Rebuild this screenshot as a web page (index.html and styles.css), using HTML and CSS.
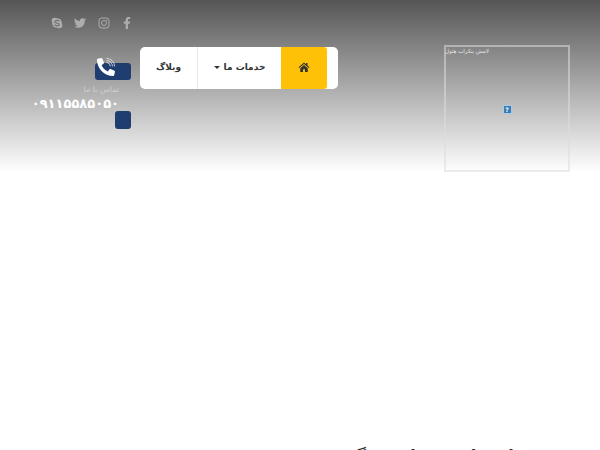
FILE: index.html
```html
<!DOCTYPE html>
<html lang="fa">
<head>
<meta charset="utf-8">
<title>وبلاگ</title>
<link rel="stylesheet" href="styles.css">
</head>
<body>
<header class="top">
  <div class="contact">
    <div class="social">
      <svg class="ico" viewBox="0 0 24 24"><circle class="bg-fill" cx="12" cy="12" r="9.6"/><circle class="bg-fill" cx="7" cy="7" r="5.6"/><circle class="bg-fill" cx="17" cy="17" r="5.6"/><path class="skype-s" d="M16.6 8.6C15.6 7 13.8 6.6 12 6.6c-2.4 0-4.4 1-4.4 2.900 0 4 8.900 1.900 8.900 5.500 0 1.600-1.900 2.600-4.300 2.600-2.200 0-3.800-.8-4.800-2.500"/></svg>
      <svg class="ico" viewBox="0 0 512 512"><path class="bg-fill" d="M459.37 151.716c.325 4.548.325 9.097.325 13.645 0 138.72-105.583 298.558-298.558 298.558-59.452 0-114.68-17.219-161.137-47.106 8.447.974 16.568 1.299 25.34 1.299 49.055 0 94.213-16.568 130.274-44.832-46.132-.975-84.792-31.188-98.112-72.772 6.498.974 12.995 1.624 19.818 1.624 9.421 0 18.843-1.3 27.614-3.573-48.081-9.747-84.143-51.98-84.143-102.985v-1.299c13.969 7.797 30.214 12.67 47.431 13.319-28.264-18.843-46.781-51.005-46.781-87.391 0-19.492 5.197-37.36 14.294-52.954 51.655 63.675 129.3 105.258 216.365 109.807-1.624-7.797-2.599-15.918-2.599-24.04 0-57.828 46.782-104.934 104.934-104.934 30.213 0 57.502 12.67 76.67 33.137 23.715-4.548 46.456-13.645 66.599-25.34-7.798 24.366-24.366 44.833-46.132 57.827 21.117-2.273 41.584-8.122 60.426-16.243-14.292 20.791-32.161 39.308-52.628 54.253z"/></svg>
      <svg class="ico" viewBox="0 0 24 24"><rect class="insta" x="2" y="2" width="20" height="20" rx="5.500"/><circle class="insta" cx="12" cy="12" r="5"/><circle class="bg-fill" cx="17.600" cy="6.400" r="1.300"/></svg>
      <svg class="ico" viewBox="0 0 320 512"><path class="bg-fill" d="M279.14 288l14.22-92.66h-88.91v-60.13c0-25.35 12.42-50.06 52.24-50.06h40.42V6.26S260.43 0 225.36 0c-73.22 0-121.08 44.38-121.08 124.72v70.62H22.89V288h81.39v224h100.17V288z"/></svg>
    </div>
    <div class="badge badge-wide">
      <svg class="phone" viewBox="0 0 512 512">
        <path class="handset" d="M18.600 24.600l104-24c11.300-2.600 22.900 3.300 27.500 13.900l48 112c4.200 9.800 1.400 21.300-6.900 28l-60.600 49.600c36 76.700 98.900 140.500 177.200 177.200l49.600-60.600c6.800-8.300 18.200-11.100 28-6.900l112 48c10.700 4.700 16.600 16.300 14 27.600l-24 104c-3.300 10.800-12.900 18.600-23.400 18.600C208 512 0 304.500 0 48c0-11.200 7.700-20.800 18.600-23.400z"/>
        <path class="waves" d="M270 130a110 110 0 0 1 110 110M270 70a170 170 0 0 1 170 170M270 10a230 230 0 0 1 230 230"/>
      </svg>
    </div>
    <p class="contact-label">تماس با ما</p>
    <p class="contact-number">۰۹۱۱۵۵۸۵۰۵۰</p>
    <div class="badge badge-small"></div>
  </div>

  <nav class="menu">
    <a class="menu-item menu-blog">وبلاگ</a>
    <a class="menu-item menu-services"><span class="caret"></span>خدمات ما</a>
    <a class="menu-item menu-home">
      <svg class="home" viewBox="0 0 24 20"><path d="M12 1L1 10.500l1.300 1.500L12 3.800l9.700 8.200L23 10.500l-4-3.500V2h-3v2.400zM4.500 12.500V20h5.500v-5.500h4V20h5.500v-7.500L12 6.200z"/></svg>
    </a>
  </nav>

  <figure class="banner">
    <figcaption class="banner-caption">لامش بنکراب هتول</figcaption>
    <span class="broken">?</span>
  </figure>
</header>
<main class="content">
  <h2 class="title">خدمات ما در تهران بزرگ</h2>
</main>
</body>
</html>
```

FILE: styles.css
```css
html, body {
  margin: 0;
  height: 450px;
  overflow: hidden;
  background: #fff;
  font-family: "DejaVu Sans", sans-serif;
}

.top {
  height: 172px;
  display: flex;
  align-items: flex-start;
  background: linear-gradient(to bottom, #555 0%, #fff 100%);
}

.contact {
  width: 131px;
  padding-top: 15px;
  display: flex;
  flex-direction: column;
  align-items: flex-end;
}

.social {
  width: 82px;
  height: 16px;
  margin-right: -2px;
  display: flex;
  align-items: center;
  justify-content: space-between;
}

.ico {
  width: 12px;
  height: 12px;
  flex: none;
}

.bg-fill { fill: #adadad; }

.skype-s {
  fill: none;
  stroke: #6f6f6f;
  stroke-width: 2.400;
}

.insta {
  fill: none;
  stroke: #adadad;
  stroke-width: 2;
}

.badge {
  background: #1f3d6e;
  border-radius: 3px;
}

.badge-wide {
  width: 36px;
  height: 17px;
  margin-top: 32px;
  position: relative;
}

.phone {
  position: absolute;
  left: 2px;
  top: -5px;
  width: 18px;
  height: 18px;
  overflow: visible;
}

.handset { fill: #fff; }

.waves {
  fill: none;
  stroke: #e2e2e2;
  stroke-width: 24;
}

.contact-label {
  margin: 4px 12px 0 0;
  font-size: 8px;
  line-height: 12px;
  letter-spacing: .4px;
  color: #cdcdcd;
  direction: rtl;
}

.contact-number {
  margin: 1px 12px 0 0;
  font-size: 13px;
  font-weight: bold;
  line-height: 14px;
  color: #fff;
  direction: rtl;
  letter-spacing: 1.200px;
}

.badge-small {
  width: 16px;
  height: 18px;
  margin-top: 0;
}

.menu {
  width: 198px;
  height: 42px;
  margin: 47px 0 0 9px;
  display: flex;
  background: #fff;
  border-radius: 5px;
}

.menu-item {
  box-sizing: border-box;
  padding-bottom: 2px;
  display: flex;
  align-items: center;
  justify-content: center;
  font-size: 9px;
  font-weight: bold;
  color: #333;
}

.menu-blog {
  width: 58px;
  border-right: 1px solid #e6e6e6;
}

.menu-services {
  width: 83px;
  gap: 4px;
}

.caret {
  width: 0;
  height: 0;
  border-left: 3px solid transparent;
  border-right: 3px solid transparent;
  border-top: 3px solid #333;
}

.menu-home {
  width: 46px;
  background: #ffc107;
  border-radius: 0 3px 3px 0;
}

.home {
  width: 12px;
  height: 10px;
  fill: #333;
}

.banner {
  box-sizing: border-box;
  width: 126px;
  height: 127px;
  margin: 45px 0 0 106px;
  border: 2px solid rgba(221, 221, 221, .55);
  display: flex;
  align-items: center;
  justify-content: center;
  position: relative;
}

.banner-caption {
  position: absolute;
  left: -1px;
  top: 0;
  font-size: 5.500px;
  line-height: 9px;
  color: #e6e6e6;
  direction: rtl;
}

.broken {
  width: 7px;
  height: 7px;
  margin-top: 1px;
  background: #3a7db4;
  border: 1px solid #a9cbe6;
  font-size: 6px;
  font-weight: bold;
  line-height: 7px;
  text-align: center;
  color: #fff;
}

.content {
  padding: 270px 55px 0 0;
}

.title {
  margin: 0;
  font-size: 16px;
  line-height: 28px;
  font-weight: bold;
  color: #222;
  direction: rtl;
}
```
